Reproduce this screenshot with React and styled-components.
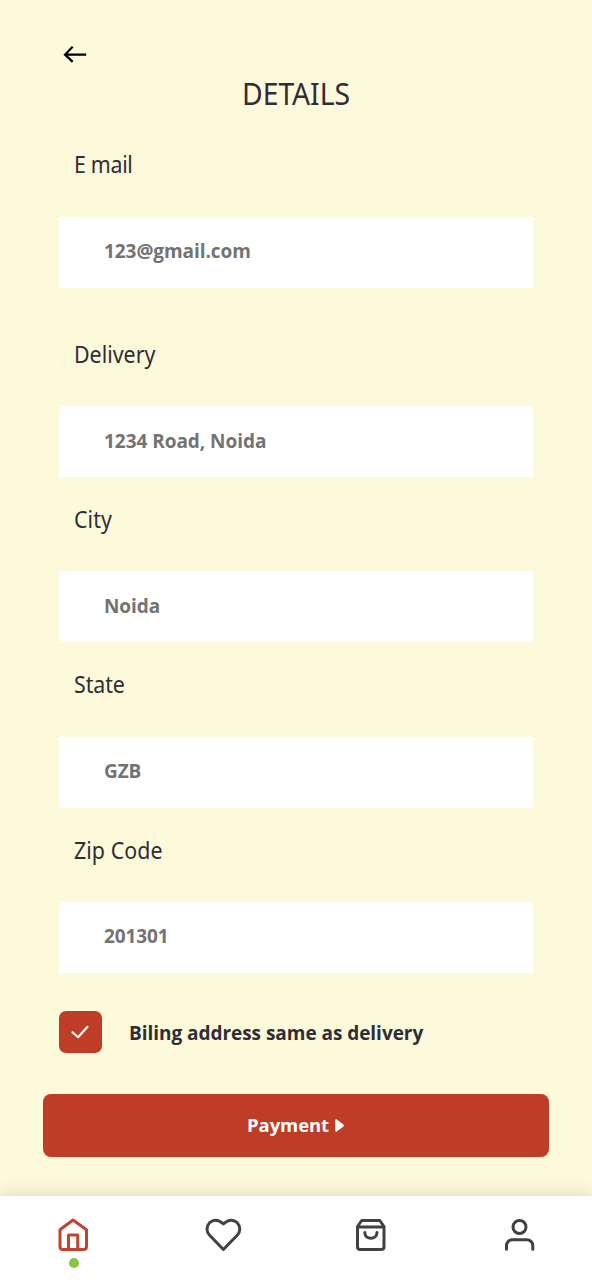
import React from "react";
import styled, { createGlobalStyle } from "styled-components";

const GlobalStyle = createGlobalStyle`
  * { box-sizing: border-box; }
  body { margin: 0; background: #fdf9db; }
`;

const Screen = styled.main`
  display: flex;
  flex-direction: column;
  width: 592px;
  height: 1280px;
  overflow: hidden;
  background: #fdf9db;
  color: #2f2d35;
  font-family: "Open Sans", "Noto Sans", sans-serif;
`;

const Header = styled.header`
  display: flex;
  flex-direction: column;
  height: 150px;
  padding-top: 42px;
`;

const BackButton = styled.button`
  display: flex;
  width: 28px;
  height: 24px;
  margin-left: 61px;
  padding: 0;
  border: 0;
  background: none;
  color: #000;
`;

const Title = styled.h1`
  margin: 7px 0 0;
  font-family: "Noto Sans", sans-serif;
  font-size: 30.5px;
  font-weight: 400;
  line-height: 40px;
  letter-spacing: -0.1px;
  text-align: center;
  transform: scaleX(0.93);
`;

const Form = styled.form`
  display: flex;
  flex-direction: column;
  flex: 1;
`;

const Field = styled.div`
  display: flex;
  flex-direction: column;
  margin: 0 59.5px ${(p) => p.$gap}px 59px;
`;

const Label = styled.label`
  height: 66.6px;
  margin-left: 15px;
  font-family: "Noto Sans", sans-serif;
  font-size: 23px;
  line-height: 28px;
  letter-spacing: ${(p) => p.$tracking}px;
  white-space: nowrap;
  transform: scaleX(0.93);
  transform-origin: left;
`;

const Input = styled.div`
  display: flex;
  align-items: center;
  height: 71px;
  padding: 0 0 ${(p) => p.$lift}px 45px;
  background: #fff;
  color: #737373;
  font-size: 19px;
  font-weight: 700;
  letter-spacing: ${(p) => p.$tracking}px;
`;

const CheckRow = styled.div`
  display: flex;
  align-items: center;
  gap: 27.5px;
  height: 42px;
  margin: 0 59px;
  font-size: 19px;
  font-weight: 700;
  letter-spacing: -0.04px;
`;

const CheckLabel = styled.span`
  padding-top: 3px;
`;

const CheckBox = styled.span`
  display: flex;
  align-items: center;
  justify-content: center;
  width: 42.5px;
  height: 42px;
  border-radius: 7px;
  background: #bf3d27;
`;

const PayButton = styled.button`
  display: flex;
  align-items: center;
  justify-content: center;
  gap: 6px;
  height: 63.5px;
  margin: 40.7px 43px 0;
  padding: 0 1px 1px 0;
  border: 0;
  border-radius: 8px;
  background: #bf3d27;
  color: #fff;
  font-family: inherit;
  font-size: 18.5px;
  font-weight: 700;
  letter-spacing: -0.1px;

  svg { margin-top: 1px; }
`;

const NavBar = styled.nav`
  display: flex;
  flex: none;
  height: 84px;
  background: #fff;
  box-shadow: 0 0 16px rgba(110, 110, 50, 0.27);
`;

const NavItem = styled.a`
  display: flex;
  flex: none;
  flex-direction: column;
  align-items: center;
  width: 148.5px;
  padding-top: 20px;
  color: ${(p) => (p.$active ? "#bf432d" : "#414141")};

  &:first-child {
    padding-right: 1.5px;
  }
`;

const ActiveDot = styled.span`
  width: 10px;
  height: 10px;
  margin-top: 4px;
  border-radius: 50%;
  background: #8bc53f;
`;

const NavIcon = ({ children }) => (
  <svg width="38" height="38" viewBox="0 0 38 38" fill="none" stroke="currentColor"
    strokeWidth="3" strokeLinecap="round" strokeLinejoin="round">{children}</svg>
);

const fields = [
  { label: "E mail", value: "123@gmail.com", gap: 52, lt: -0.35, vt: -0.07, lift: 1.6 },
  { label: "Delivery", value: "1234 Road, Noida", gap: 27.7, lt: 0, vt: -0.04, lift: 1.6 },
  { label: "City", value: "Noida", gap: 27.9, lt: 0.1, vt: -0.1, lift: 1.6 },
  { label: "State", value: "GZB", gap: 27.8, lt: -0.1, vt: -0.1, lift: 2.6 },
  { label: "Zip Code", value: "201301", gap: 37.6, lt: 0.05, vt: -0.1, lift: 3.4 },
];

export default function App() {
  return (
    <Screen>
      <GlobalStyle />
      <Header>
        <BackButton aria-label="Back">
          <svg width="28" height="24" viewBox="0 0 28 24" fill="none" stroke="currentColor" strokeWidth="2.2">
            <path d="M25.2 12.6H4M11.7 4.8L4 12.6l7.7 7.3" />
          </svg>
        </BackButton>
        <Title>DETAILS</Title>
      </Header>
      <Form>
        {fields.map((f) => (
          <Field key={f.label} $gap={f.gap}>
            <Label $tracking={f.lt}>{f.label}</Label>
            <Input $tracking={f.vt} $lift={f.lift}>{f.value}</Input>
          </Field>
        ))}
        <CheckRow>
          <CheckBox>
            <svg width="20" height="16" viewBox="0 0 20 16" fill="none" stroke="#fff" strokeWidth="2.2" strokeLinecap="round" strokeLinejoin="round">
              <path d="M2.5 8.2L8 13.2 17.5 2.8" />
            </svg>
          </CheckBox>
          <CheckLabel>Biling address same as delivery</CheckLabel>
        </CheckRow>
        <PayButton type="button">
          Payment
          <svg width="9" height="13" viewBox="0 0 9 13" fill="#fff">
            <path d="M0.2 1.4Q0.2 -0.2 1.8 0.5L8.4 5.6Q9.2 6.5 8.4 7.4L1.8 12.5Q0.2 13.2 0.2 11.6Z" />
          </svg>
        </PayButton>
      </Form>
      <NavBar>
        <NavItem $active>
          <NavIcon>
            <path d="M18 4L5 13.7V30.5Q5 33.5 8 33.5H28.5Q31.5 33.5 31.5 30.5V13.7ZM13.5 33V19H22.7V33" />
          </NavIcon>
          <ActiveDot />
        </NavItem>
        <NavItem>
          <NavIcon>
            <path d="M19.4 33.5L5.6 19.2A8.8 8.8 0 0 1 5.6 6.7Q11.8 1.2 19.4 8Q27 1.2 33.2 6.7A8.8 8.8 0 0 1 33.2 19.2Z" />
          </NavIcon>
        </NavItem>
        <NavItem>
          <NavIcon>
            <path d="M5.5 10.5L9.7 4.5H27.8L32 10.5V30.7Q32 33.5 29.2 33.5H8.3Q5.5 33.5 5.5 30.7ZM5.5 11H32M12.8 16.5C13 24.3 24.8 24.3 25 16.5" />
          </NavIcon>
        </NavItem>
        <NavItem>
          <NavIcon>
            <circle cx="18.5" cy="11" r="6.5" />
            <path d="M5.5 33.3V29.6A6 6 0 0 1 11.5 23.7H25.8A6 6 0 0 1 31.8 29.6V33.3" />
          </NavIcon>
        </NavItem>
      </NavBar>
    </Screen>
  );
}
